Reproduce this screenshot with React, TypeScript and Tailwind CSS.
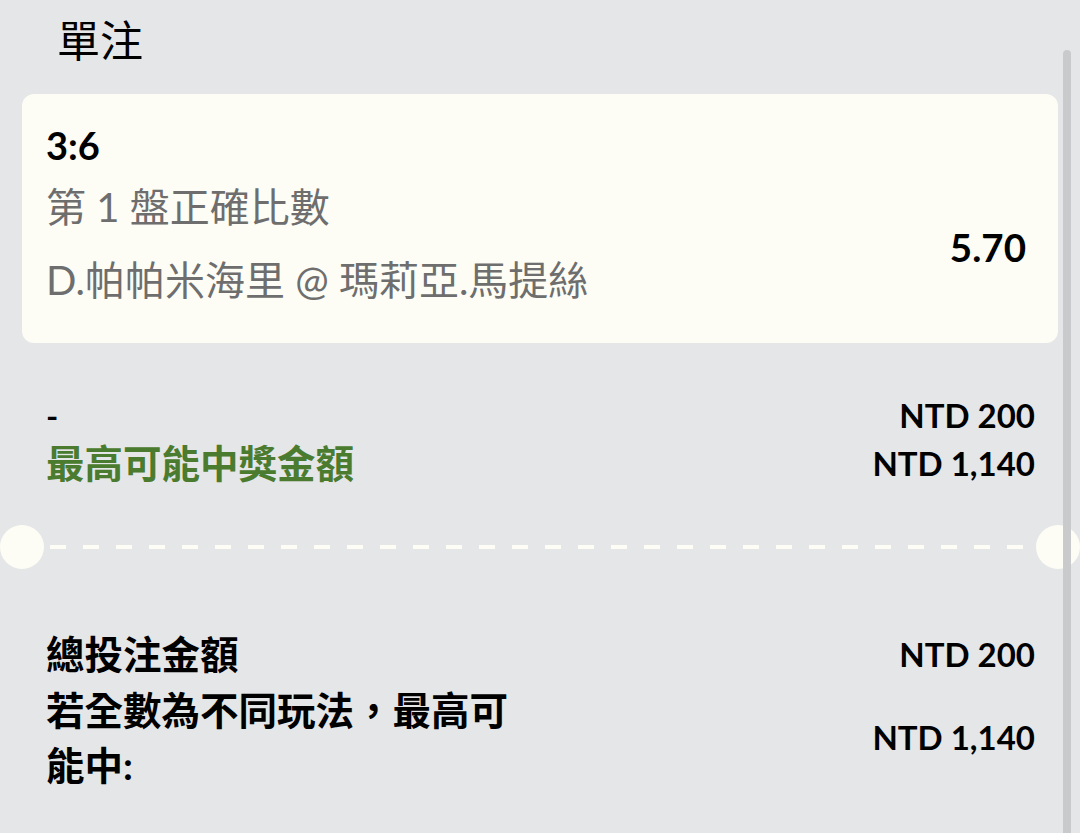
import React from "react";

const font = { fontFamily: 'Lato, "Noto Sans CJK TC", sans-serif' };

function Row({ label, amount, labelClass }: { label: string; amount: string; labelClass: string }) {
  return (
    <div className="flex items-center justify-between h-[48px]">
      <span className={labelClass}>{label}</span>
      <span className="text-[33px] font-bold text-black">{amount}</span>
    </div>
  );
}

export default function App() {
  return (
    <div className="relative h-[833px] w-[1080px] overflow-hidden bg-[#e5e6e8]" style={font}>
      {/* scrollbar */}
      <div className="absolute right-[9px] top-[50px] bottom-0 w-[8px] rounded-t-full bg-[#c9cacc] z-10" />

      <div className="pl-[57px] pt-[18px] text-[43px] leading-[46px] text-black">單注</div>

      <div className="mx-[22px] mt-[30px] h-[249px] rounded-[12px] bg-[#fdfdf5] flex justify-between">
        <div className="pl-[24px] pt-[27px] flex flex-col">
          <div className="text-[38px] font-bold leading-[48px] text-black">3:6</div>
          <div className="mt-[14px] text-[40px] leading-[48px] text-[#6e6e6e]">第 1 盤正確比數</div>
          <div className="mt-[25px] text-[40px] leading-[48px] text-[#6e6e6e]">D.帕帕米海里 @ 瑪莉亞.馬提絲</div>
        </div>
        <div className="pr-[32px] pt-[131px] text-[38.5px] font-bold leading-[44px] text-black">5.70</div>
      </div>

      <div className="mt-[49px] pl-[46px] pr-[45px]">
        <Row label="-" amount="NTD 200" labelClass="text-[33px] font-bold text-black" />
        <Row label="最高可能中獎金額" amount="NTD 1,140" labelClass="text-[38.5px] font-bold text-[#4b7b2e]" />
      </div>

      <div className="mt-[37px] flex items-center gap-[6px]">
        <div className="h-[44px] w-[44px] shrink-0 rounded-full bg-[#fdfdf5]" />
        <div className="h-[4px] flex-1 bg-[repeating-linear-gradient(90deg,#fdfdf5_0_16px,transparent_16px_33px)]" />
        <div className="h-[44px] w-[44px] shrink-0 rounded-full bg-[#fdfdf5]" />
      </div>

      <div className="mt-[58px] pl-[46px] pr-[45px]">
        <div className="flex items-center justify-between h-[56px]">
          <span className="text-[38.5px] font-bold text-black">總投注金額</span>
          <span className="text-[33px] font-bold text-black">NTD 200</span>
        </div>
        <div className="flex items-center justify-between">
          <span className="max-w-[490px] text-[38.5px] font-bold leading-[55px] text-black">若全數為不同玩法，最高可能中:</span>
          <span className="text-[33px] font-bold text-black">NTD 1,140</span>
        </div>
      </div>
    </div>
  );
}
